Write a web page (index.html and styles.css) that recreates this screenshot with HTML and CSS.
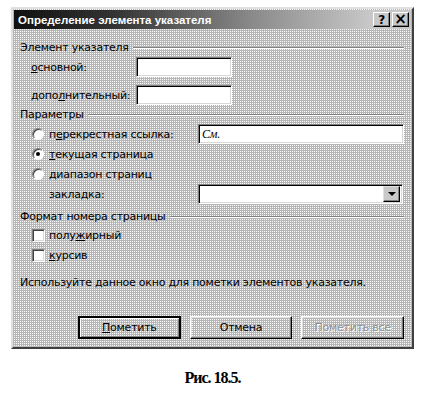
FILE: index.html
```html
<!DOCTYPE html>
<html lang="ru">
<head>
  <meta charset="UTF-8">
  <title>Определение элемента указателя</title>
  <link rel="stylesheet" href="styles.css">
</head>
<body>

  <div class="page">
    <!-- Dialog window -->
    <div class="dialog">
      <div class="titlebar">
        <span class="title">Определение элемента указателя</span>
        <span class="tb-btn">?</span>
        <span class="tb-btn close">×</span>
      </div>

      <div class="content">
        <!-- Элемент указателя -->
        <div class="group-head"><span>Элемент указателя</span><i class="groove"></i></div>
        <div class="row entry-row first">
          <label class="entry-label"><u>о</u>сновной:</label>
          <span class="field short"></span>
        </div>
        <div class="row entry-row second">
          <label class="entry-label">допо<u>л</u>нительный:</label>
          <span class="field short"></span>
        </div>

        <!-- Параметры -->
        <div class="group-head params"><span>Параметры</span><i class="groove"></i></div>
        <div class="row opt-row first">
          <label class="opt"><span class="radio"></span>п<u>е</u>рекрестная ссылка:</label>
          <span class="field wide"><em class="see">См.</em></span>
        </div>
        <div class="row opt-row">
          <label class="opt"><span class="radio checked"></span><u>т</u>екущая страница</label>
        </div>
        <div class="row opt-row">
          <label class="opt"><span class="radio"></span><u>д</u>иапазон страниц</label>
        </div>
        <div class="row opt-row">
          <label class="opt sub">закладка:</label>
          <span class="field wide combo"><span class="drop"><i class="arrow"></i></span></span>
        </div>

        <!-- Формат номера страницы -->
        <div class="group-head format"><span>Формат номера страницы</span><i class="groove"></i></div>
        <div class="row check-row first">
          <label class="opt"><span class="check"></span>полу<u>ж</u>ирный</label>
        </div>
        <div class="row check-row">
          <label class="opt"><span class="check"></span><u>к</u>урсив</label>
        </div>

        <p class="hint">Используйте данное окно для пометки элементов указателя.</p>

        <div class="buttons">
          <span class="btn default"><u>П</u>ометить</span>
          <span class="btn">Отмена</span>
          <span class="btn disabled">Пометить все</span>
        </div>
      </div>
    </div>

    <p class="caption">Рис. 18.5.</p>
  </div>

</body>
</html>
```

FILE: styles.css
```css
/* Global Styles */
body {
  margin: 0;
  background-color: #fff;
  font-family: "DejaVu Sans", sans-serif;
  font-size: 11px;
  letter-spacing: -0.25px;
  color: #000;
}

.page {
  padding: 7px 0 0 11px;
}

/* Dialog frame */
.dialog {
  box-sizing: border-box;
  width: 403px;
  height: 342px;
  padding: 1px;
  border: 2px solid;
  border-color: #e0e0e0 #404040 #404040 #e0e0e0;
  background-color: #b6b6b6;
  background-image: repeating-conic-gradient(#fafafa 0 25%, transparent 0 100%);
  background-size: 2px 2px;
  display: flex;
  flex-direction: column;
}

.titlebar {
  height: 19px;
  display: flex;
  align-items: center;
  padding: 0 2px 0 4px;
  background: linear-gradient(to right, #111 0%, #333 25%, #8a8a8a 60%, #c8c8c8 90%);
}

.title {
  flex: 1;
  color: #fff;
  font-family: "Liberation Sans", sans-serif;
  font-weight: bold;
  font-size: 11.5px;
  letter-spacing: 0;
}

.tb-btn {
  box-sizing: border-box;
  width: 17px;
  height: 15px;
  margin-left: 2px;
  display: flex;
  align-items: center;
  justify-content: center;
  font-weight: bold;
  font-size: 12px;
  line-height: 1;
  background: #c8c8c8;
  border: 1px solid;
  border-color: #fff #000 #000 #fff;
  box-shadow: inset -1px -1px #808080;
}

.tb-btn.close {
  font-size: 15px;
}

/* Content */
.content {
  flex: 1;
  padding: 11px 7px 0 6px;
  display: flex;
  flex-direction: column;
}

.group-head {
  height: 14px;
  display: flex;
  align-items: center;
  gap: 4px;
}

.group-head.params {
  margin-top: 2px;
}

.group-head.format {
  margin-top: 5px;
}

.groove {
  flex: 1;
  height: 0;
  border-top: 1px solid #808080;
  border-bottom: 1px solid #fff;
  margin-top: 1px;
}

.row {
  height: 20px;
  display: flex;
  align-items: center;
}

.entry-row.first {
  margin-top: 3px;
}

.entry-row.second {
  margin-top: 8px;
}

.entry-label {
  box-sizing: border-box;
  width: 116px;
  padding-left: 11px;
}

.opt-row.first {
  margin-top: 3px;
}

.check-row.first {
  margin-top: 2px;
}

.opt {
  width: 178px;
  padding-left: 12px;
  box-sizing: border-box;
  display: flex;
  align-items: center;
}

.opt.sub {
  padding-left: 29px;
}

/* Sunken input fields */
.field {
  box-sizing: border-box;
  height: 20px;
  background: #fff;
  border: 1px solid;
  border-color: #808080 #fff #fff #808080;
  box-shadow: inset 1px 1px #000, inset -1px -1px #d8d8d8;
  display: flex;
  align-items: center;
}

.field.short {
  width: 96px;
}

.field.wide {
  width: 206px;
}

.field.combo {
  width: 205px;
  justify-content: flex-end;
  padding: 2px;
}

.see {
  font-family: "Liberation Serif", serif;
  font-size: 12px;
  padding-left: 3px;
}

.drop {
  box-sizing: border-box;
  width: 17px;
  height: 16px;
  background: #c8c8c8;
  border: 1px solid;
  border-color: #e0e0e0 #000 #000 #e0e0e0;
  box-shadow: inset -1px -1px #808080;
  display: flex;
  align-items: center;
  justify-content: center;
}

.arrow {
  width: 0;
  height: 0;
  border-left: 4px solid transparent;
  border-right: 4px solid transparent;
  border-top: 4px solid #000;
}

/* Radio buttons and check boxes */
.radio {
  box-sizing: border-box;
  width: 12px;
  height: 12px;
  margin-right: 5px;
  border-radius: 50%;
  background: #fff;
  border: 1px solid;
  border-color: #808080 #fff #fff #808080;
  box-shadow: inset 1px 1px #404040;
  display: flex;
  align-items: center;
  justify-content: center;
}

.radio.checked::after {
  content: "";
  width: 4px;
  height: 4px;
  border-radius: 50%;
  background: #000;
}

.check {
  box-sizing: border-box;
  width: 13px;
  height: 13px;
  margin-right: 4px;
  background: #fff;
  border: 1px solid;
  border-color: #808080 #fff #fff #808080;
  box-shadow: inset 1px 1px #404040, inset -1px -1px #d8d8d8;
}

.hint {
  margin: 11px 0 0;
  height: 14px;
  line-height: 14px;
}

/* Buttons */
.buttons {
  margin-top: 26px;
  padding-left: 58px;
  display: flex;
  gap: 9px;
}

.btn {
  box-sizing: border-box;
  width: 103px;
  height: 23px;
  display: flex;
  align-items: center;
  justify-content: center;
  border: 1px solid;
  border-color: #fff #000 #000 #fff;
  box-shadow: inset -1px -1px #808080, inset 1px 1px #e0e0e0;
}

.btn.default {
  border: 2px solid #000;
  box-shadow: inset 1px 1px #fff, inset -1px -1px #808080;
}

.btn.disabled {
  color: #909090;
  text-shadow: 1px 1px #fff;
}

.caption {
  margin: 20px 0 0;
  width: 403px;
  text-align: center;
  font-family: "Liberation Serif", serif;
  font-weight: bold;
  font-size: 16px;
  letter-spacing: -1px;
}
```
